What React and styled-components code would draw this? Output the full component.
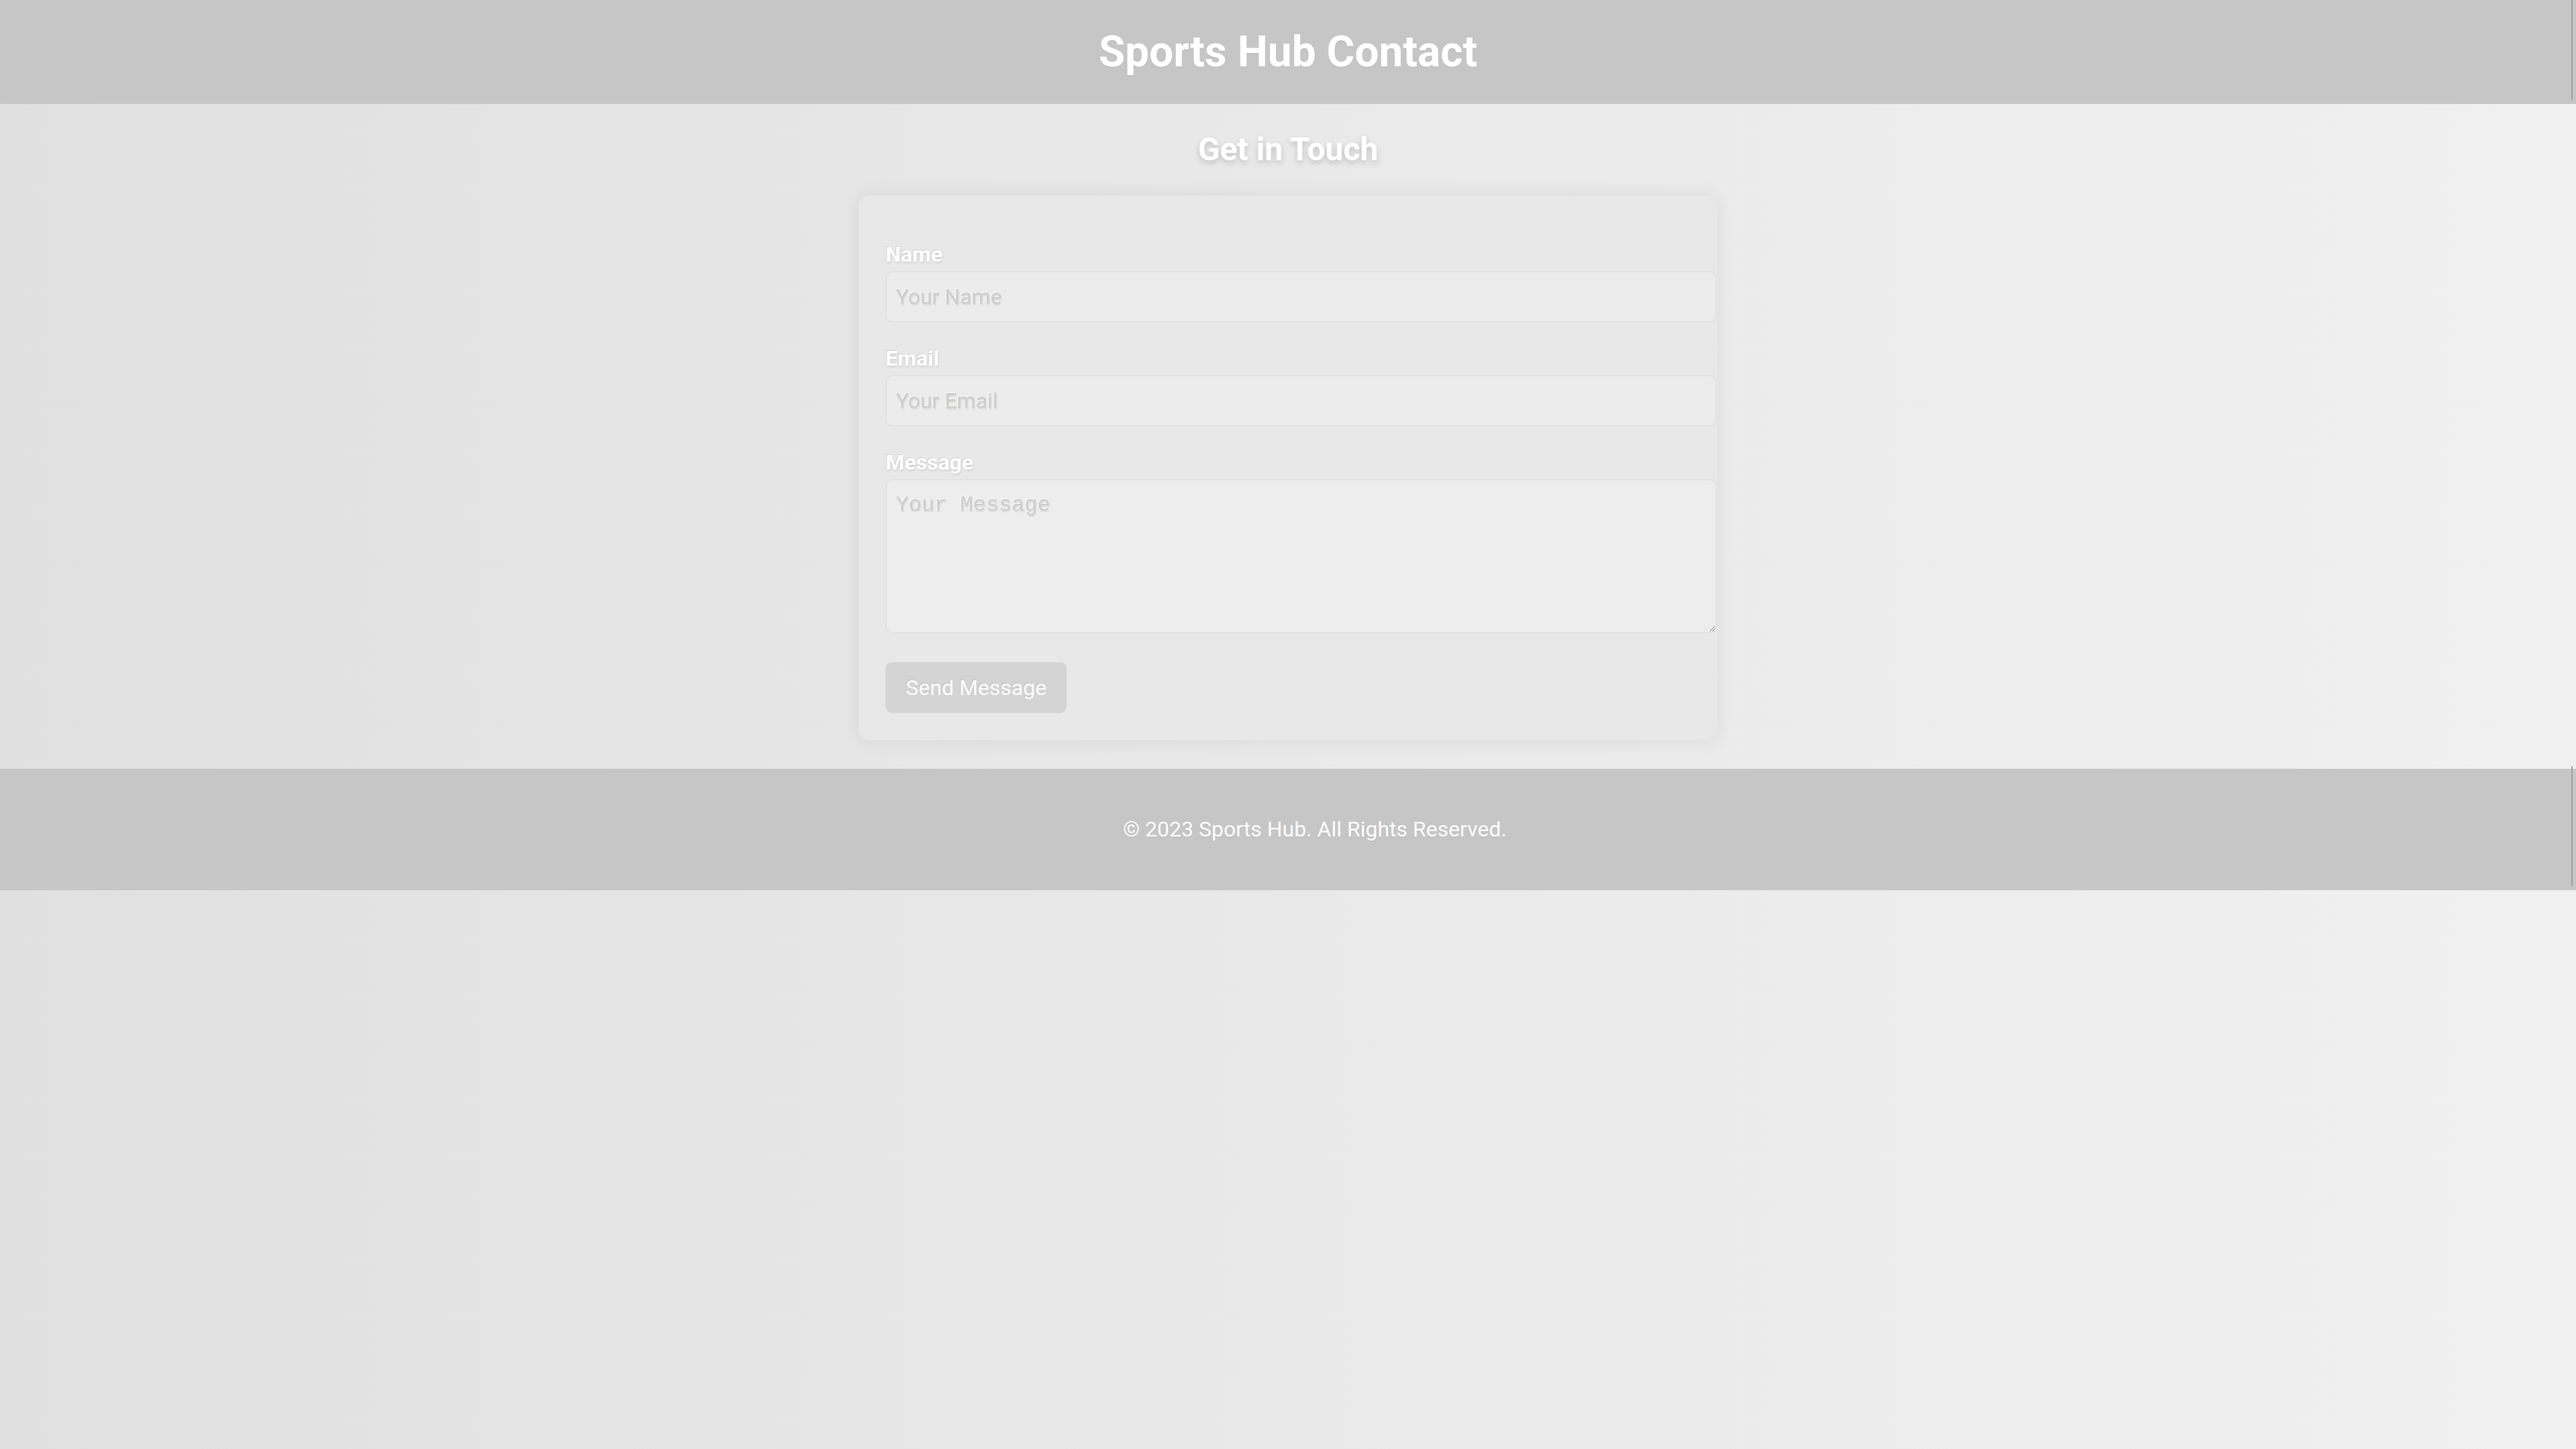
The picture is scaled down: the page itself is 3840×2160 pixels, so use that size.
import React from 'react';
import styled, { createGlobalStyle } from 'styled-components';

const GlobalStyle = createGlobalStyle`
  html, body {
    margin: 0;
    padding: 0;
  }

  body {
    min-height: 100vh;
    overflow-x: hidden;
    font-family: Roboto, "Liberation Sans", sans-serif;
    background: linear-gradient(90deg, #e0e0e0 0%, #e9e9e9 50%, #f0f0f0 100%);
  }
`;

const Header = styled.header`
  position: relative;
  padding: 40px;
  background: #c6c6c6;
  text-align: center;

  &::after {
    content: '';
    position: absolute;
    top: 0;
    bottom: 6px;
    left: calc(100vw - 7px);
    width: 2px;
    background: #9e9e9e;
  }
`;

const Title = styled.h1`
  margin: 0;
  font-size: 64px;
  font-weight: 700;
  line-height: 75px;
  color: #ffffff;
  text-shadow: 0 1px 2px rgba(0, 0, 0, 0.08);
`;

const Main = styled.main`
  padding: 40px 0 42px;
`;

const SectionTitle = styled.h2`
  margin: 0 0 40px;
  font-size: 48px;
  font-weight: 700;
  line-height: 56px;
  text-align: center;
  color: #ffffff;
  text-shadow: 0 4px 8px rgba(0, 0, 0, 0.18);
`;

const Card = styled.form`
  max-width: 1200px;
  margin: 0 auto;
  padding: 69px 40px 40px;
  background: #e8e8e8;
  border: 1px solid #e2e2e2;
  border-radius: 16px;
  box-shadow: 0 0 30px rgba(0, 0, 0, 0.07);
`;

const Group = styled.div`
  margin-bottom: ${props => props.$gap || 35}px;
`;

const Label = styled.label`
  display: block;
  margin-bottom: 6px;
  font-size: 32px;
  font-weight: 700;
  line-height: 37px;
  color: #ffffff;
  text-shadow: -1px -1px 0 rgba(0, 0, 0, 0.12), 1px 2px 3px rgba(0, 0, 0, 0.1);
`;

const Field = styled.input`
  display: block;
  width: 100%;
  padding: 18px 22px 18px 13px;
  border: 2px solid #e2e2e2;
  border-radius: 10px;
  background: #ececec;
  font-family: Roboto, "Liberation Sans", sans-serif;
  font-size: 32px;
  line-height: 37px;
  color: #555;
  outline: none;

  &::placeholder {
    color: #cdcdcd;
    text-shadow: -1px -1px 0 rgba(255, 255, 255, 0.9), 1px 2px 2px rgba(0, 0, 0, 0.1);
  }
`;

const MessageArea = styled.textarea`
  display: block;
  width: 100%;
  height: 190px;
  padding: 18px 22px 18px 13px;
  border: 2px solid #e2e2e2;
  border-radius: 10px;
  background: #ededed;
  font-family: "Liberation Mono", "DejaVu Sans Mono", monospace;
  font-size: 32px;
  line-height: 37px;
  color: #555;
  resize: vertical;
  outline: none;

  &::placeholder {
    color: #cdcdcd;
    text-shadow: -1px -1px 0 rgba(255, 255, 255, 0.9), 1px 2px 2px rgba(0, 0, 0, 0.1);
  }
`;

const SendButton = styled.button`
  display: inline-block;
  padding: 20px 30px;
  border: none;
  border-radius: 10px;
  background: #d4d4d4;
  font-family: Roboto, "Liberation Sans", sans-serif;
  font-size: 32px;
  line-height: 36px;
  color: #ffffff;
  text-shadow: -1px -1px 0 rgba(0, 0, 0, 0.12);
  cursor: pointer;
`;

const Footer = styled.footer`
  position: relative;
  width: 100%;
  padding: 40px;
  background: #c6c6c6;
  text-align: center;
  color: #ffffff;

  &::after {
    content: '';
    position: absolute;
    top: -4px;
    bottom: 6px;
    left: calc(100vw - 7px);
    width: 2px;
    background: #9e9e9e;
  }

  p {
    margin: 32px 0;
    font-size: 32px;
    line-height: 37px;
    text-shadow: 0 1px 2px rgba(0, 0, 0, 0.08);
  }
`;

const App = () => {
  return (
    <>
      <GlobalStyle />
      <Header>
        <Title>Sports Hub Contact</Title>
      </Header>

      <Main>
        <SectionTitle>Get in Touch</SectionTitle>
        <Card onSubmit={e => e.preventDefault()}>
          <Group>
            <Label htmlFor="name">Name</Label>
            <Field id="name" type="text" placeholder="Your Name" />
          </Group>
          <Group>
            <Label htmlFor="email">Email</Label>
            <Field id="email" type="email" placeholder="Your Email" />
          </Group>
          <Group $gap={43}>
            <Label htmlFor="message">Message</Label>
            <MessageArea id="message" placeholder="Your Message" />
          </Group>
          <SendButton type="submit">Send Message</SendButton>
        </Card>
      </Main>

      <Footer>
        <p>© 2023 Sports Hub. All Rights Reserved.</p>
      </Footer>
    </>
  );
};

export default App;
